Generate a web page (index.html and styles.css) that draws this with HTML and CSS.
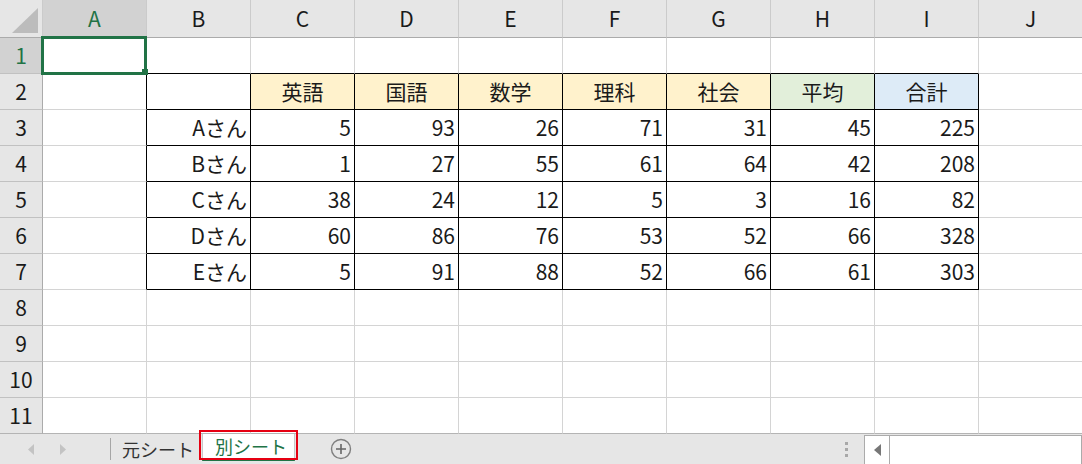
FILE: index.html
```html
<!DOCTYPE html>
<html lang="ja">
<head>
  <meta charset="UTF-8" />
  <title>別シート - Excel</title>
  <link rel="stylesheet" href="styles.css">
</head>
<body>
  <div class="sheet">
    <table class="grid">
      <colgroup>
        <col class="head-col">
        <col><col><col><col><col><col><col><col><col><col>
      </colgroup>
      <thead>
        <tr>
          <th class="corner"><span class="tri"></span></th>
          <th class="sel">A</th><th>B</th><th>C</th><th>D</th><th>E</th>
          <th>F</th><th>G</th><th>H</th><th>I</th><th>J</th>
        </tr>
      </thead>
      <tbody>
        <tr>
          <th class="sel">1</th>
          <td class="active"></td>
          <td class="t"></td><td class="t"></td><td class="t"></td><td class="t"></td>
          <td class="t"></td><td class="t"></td><td class="t"></td><td class="t"></td>
          <td></td>
        </tr>
        <tr>
          <th>2</th>
          <td class="l"></td>
          <td class="d"></td>
          <td class="d c subj">英語</td>
          <td class="d c subj">国語</td>
          <td class="d c subj">数学</td>
          <td class="d c subj">理科</td>
          <td class="d c subj">社会</td>
          <td class="d c avg">平均</td>
          <td class="d c sum">合計</td>
          <td></td>
        </tr>
        <tr>
          <th>3</th><td class="l"></td>
          <td class="d">Aさん</td><td class="d">5</td><td class="d">93</td><td class="d">26</td>
          <td class="d">71</td><td class="d">31</td><td class="d">45</td><td class="d">225</td><td></td>
        </tr>
        <tr>
          <th>4</th><td class="l"></td>
          <td class="d">Bさん</td><td class="d">1</td><td class="d">27</td><td class="d">55</td>
          <td class="d">61</td><td class="d">64</td><td class="d">42</td><td class="d">208</td><td></td>
        </tr>
        <tr>
          <th>5</th><td class="l"></td>
          <td class="d">Cさん</td><td class="d">38</td><td class="d">24</td><td class="d">12</td>
          <td class="d">5</td><td class="d">3</td><td class="d">16</td><td class="d">82</td><td></td>
        </tr>
        <tr>
          <th>6</th><td class="l"></td>
          <td class="d">Dさん</td><td class="d">60</td><td class="d">86</td><td class="d">76</td>
          <td class="d">53</td><td class="d">52</td><td class="d">66</td><td class="d">328</td><td></td>
        </tr>
        <tr>
          <th>7</th><td class="l"></td>
          <td class="d">Eさん</td><td class="d">5</td><td class="d">91</td><td class="d">88</td>
          <td class="d">52</td><td class="d">66</td><td class="d">61</td><td class="d">303</td><td></td>
        </tr>
        <tr><th>8</th><td></td><td></td><td></td><td></td><td></td><td></td><td></td><td></td><td></td><td></td></tr>
        <tr><th>9</th><td></td><td></td><td></td><td></td><td></td><td></td><td></td><td></td><td></td><td></td></tr>
        <tr><th>10</th><td></td><td></td><td></td><td></td><td></td><td></td><td></td><td></td><td></td><td></td></tr>
        <tr class="last"><th>11</th><td></td><td></td><td></td><td></td><td></td><td></td><td></td><td></td><td></td><td></td></tr>
      </tbody>
    </table>

    <div class="tabbar">
      <div class="nav">
        <svg width="6" height="11" viewBox="0 0 6 11"><path d="M6 0 L0 5.5 L6 11 Z" fill="#c3c3c3"/></svg>
        <svg width="6" height="11" viewBox="0 0 6 11"><path d="M0 0 L6 5.5 L0 11 Z" fill="#c3c3c3"/></svg>
      </div>
      <div class="divider"></div>
      <div class="tab">元シート</div>
      <div class="tab current">別シート</div>
      <svg class="add" width="22" height="22" viewBox="0 0 22 22">
        <circle cx="11" cy="11" r="9.5" fill="none" stroke="#7f7f7f" stroke-width="1.4"/>
        <path d="M11 6 V16 M6 11 H16" stroke="#666" stroke-width="1.6"/>
      </svg>
      <div class="spacer"></div>
      <div class="dots"><i></i><i></i><i></i></div>
      <div class="hscroll">
        <div class="btn">
          <svg width="7" height="12" viewBox="0 0 7 12"><path d="M7 0 L0 6 L7 12 Z" fill="#777"/></svg>
        </div>
      </div>
    </div>
  </div>
</body>
</html>
```

FILE: styles.css
```css
body {
  margin: 0;
  background: #fff;
  font-family: "Noto Sans CJK JP", "Noto Sans", sans-serif;
  color: #1a1a1a;
  overflow: hidden;
}
.sheet {
  width: 1082px;
  height: 464px;
  overflow: hidden;
}
.grid {
  table-layout: fixed;
  width: 1083px;
  border-collapse: separate;
  border-spacing: 0;
  font-size: 21px;
}
.grid col {
  width: 104px;
}
.grid col.head-col {
  width: 43px;
}
.grid th,
.grid td {
  box-sizing: border-box;
  height: 36px;
  padding: 0 3px;
  line-height: 1;
  border-right: 1px solid #d4d4d4;
  border-bottom: 1px solid #d4d4d4;
  white-space: nowrap;
}
.grid td {
  text-align: right;
}
.grid th {
  font-weight: normal;
  background: #e6e6e6;
  text-align: center;
  padding: 0;
}
.grid thead th {
  height: 38px;
  border-right-color: #cbcbcb;
  border-bottom-color: #ababab;
}
.grid tbody th {
  border-right-color: #ababab;
  border-bottom-color: #c1c1c1;
}
.grid tr.last th,
.grid tr.last td {
  border-bottom-color: #b4b4b4;
}
.grid th.sel {
  background: #d2d2d2;
  color: #217346;
}
.corner {
  position: relative;
}
.tri {
  position: absolute;
  left: 12px;
  top: 8px;
  width: 0;
  height: 0;
  border-left: 26px solid transparent;
  border-bottom: 25px solid #bcbcbc;
}

/* table body borders */
.grid td.d {
  border-right-color: #000;
  border-bottom-color: #000;
}
.grid td.l {
  border-right-color: #000;
}
.grid td.t {
  border-bottom-color: #000;
}
.grid td.c {
  text-align: center;
}
.subj {
  background: #fff2cc;
}
.avg {
  background: #e2efda;
}
.sum {
  background: #ddebf7;
}

/* selected cell A1 */
.grid td.active {
  position: relative;
}
.active::after {
  content: "";
  position: absolute;
  left: -2px;
  top: -2px;
  right: -1px;
  bottom: -2px;
  border: 3px solid #217346;
}
.active::before {
  content: "";
  position: absolute;
  right: -2px;
  bottom: -2px;
  width: 6px;
  height: 6px;
  background: #217346;
  z-index: 2;
}

/* sheet tabs */
.tabbar {
  display: flex;
  align-items: center;
  height: 30px;
  background: #e6e6e6;
  font-size: 18px;
}
.nav {
  display: flex;
  gap: 26px;
  box-sizing: border-box;
  width: 110px;
  padding-left: 28px;
}
.divider {
  width: 1px;
  height: 22px;
  background: #a6a6a6;
}
.tab {
  box-sizing: border-box;
  width: 91px;
  padding-left: 11px;
  color: #333;
  line-height: 1;
}
.tab.current {
  position: relative;
  align-self: flex-start;
  width: 93px;
  height: 27px;
  padding-left: 12px;
  padding-top: 3px;
  background: #fff;
  color: #217346;
  border-left: 1px solid #c8c8c8;
  border-right: 1px solid #c8c8c8;
  border-bottom: 3px solid #217346;
}
.tab.current::after {
  content: "";
  position: absolute;
  left: -4px;
  right: -4px;
  top: -4px;
  bottom: -2px;
  border: 2px solid #e60012;
}
.add {
  margin-left: 35px;
}
.spacer {
  flex: 1;
}
.dots {
  display: flex;
  flex-direction: column;
  gap: 3px;
  margin-right: 16px;
}
.dots i {
  display: block;
  width: 3px;
  height: 3px;
  background: #a8a8a8;
}
.hscroll {
  align-self: flex-end;
  box-sizing: border-box;
  width: 218px;
  height: 29px;
  background: #fff;
  border: 1px solid #ababab;
  border-bottom: none;
  display: flex;
}
.btn {
  width: 24px;
  border-right: 1px solid #ababab;
  display: flex;
  align-items: center;
  justify-content: center;
}
```
